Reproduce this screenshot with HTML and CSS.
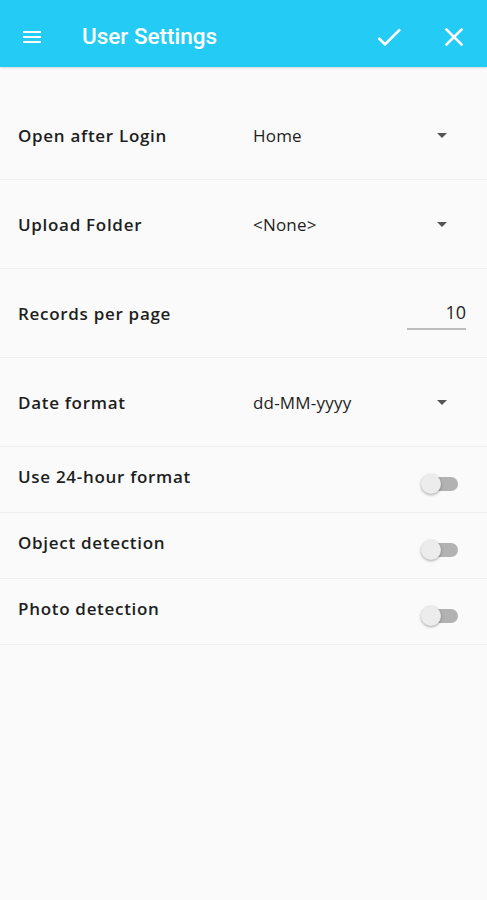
FILE: index.html
```
<!DOCTYPE html>
<html>
    <head>
        <title>User Settings</title>
        <link rel="stylesheet" href="styles.css">
    </head>
    <body>
        <header class="app-bar">
            <svg class="menu-icon" width="24" height="24" viewBox="0 0 24 24">
                <path d="M3 6h18v2H3zM3 11h18v2H3zM3 16h18v2H3z" fill="#fff" />
            </svg>
            <div class="app-title">User Settings</div>
            <svg class="action-icon" width="32" height="32" viewBox="0 0 24 24">
                <path d="M9 16.2L4.8 12l-1.4 1.4L9 19 21 7l-1.4-1.4L9 16.2z" fill="#fff" />
            </svg>
            <svg class="action-icon close-icon" width="32" height="32" viewBox="0 0 24 24">
                <path d="M19 6.4L17.6 5 12 10.6 6.4 5 5 6.4 10.6 12 5 17.6 6.4 19 12 13.4 17.6 19 19 17.6 13.4 12z" fill="#fff" />
            </svg>
        </header>
        <div class="settings">
            <div class="row select-row">
                <div class="label">Open after Login</div>
                <div class="value">Home</div>
                <div class="caret"></div>
            </div>
            <div class="row select-row">
                <div class="label">Upload Folder</div>
                <div class="value">&lt;None&gt;</div>
                <div class="caret"></div>
            </div>
            <div class="row select-row">
                <div class="label">Records per page</div>
                <div class="number-input">10</div>
            </div>
            <div class="row select-row">
                <div class="label">Date format</div>
                <div class="value">dd-MM-yyyy</div>
                <div class="caret"></div>
            </div>
            <div class="row toggle-row">
                <div class="label">Use 24-hour format</div>
                <div class="switch"><div class="switch-thumb"></div></div>
            </div>
            <div class="row toggle-row">
                <div class="label">Object detection</div>
                <div class="switch"><div class="switch-thumb"></div></div>
            </div>
            <div class="row toggle-row">
                <div class="label">Photo detection</div>
                <div class="switch"><div class="switch-thumb"></div></div>
            </div>
        </div>
    </body>
</html>
```

FILE: styles.css
```
body {
    margin: 0;
    background-color: #fafafa;
    font-family: "Open Sans", "DejaVu Sans", sans-serif;
    color: #1e1e1e;
}
.app-bar {
    display: flex;
    align-items: center;
    height: 61px;
    padding: 6px 17px 0 20px;
    background-color: #23cbf5;
    box-shadow: 0 1px 2px rgba(0, 0, 0, 0.15);
}
.menu-icon {
    margin-right: 38px;
}
.app-title {
    flex: 1;
    font-family: Roboto, sans-serif;
    font-weight: 500;
    font-size: 22.5px;
    color: #fff;
    padding-bottom: 2px;
}
.close-icon {
    margin-left: 33px;
}
.settings {
    padding-top: 24px;
}
.row {
    display: flex;
    align-items: center;
    padding: 0 21px 0 18px;
    border-bottom: 1px solid #eeeeee;
}
.select-row {
    height: 88px;
}
.toggle-row {
    height: 65px;
}
.label {
    width: 235px;
    font-size: 17px;
    font-weight: 600;
    letter-spacing: 0.7px;
}
.value {
    flex: 1;
    font-size: 17px;
    font-weight: 500;
    letter-spacing: 0.2px;
}
.caret {
    width: 0;
    height: 0;
    border-left: 5px solid transparent;
    border-right: 5px solid transparent;
    border-top: 5px solid #555;
    margin-right: 19px;
}
.number-input {
    margin-left: auto;
    width: 59px;
    text-align: right;
    font-size: 18px;
    padding: 0 0 4px 0;
    border-bottom: 2px solid #bdbdbd;
    margin-top: 3px;
}
.toggle-row .label {
    margin-top: -6px;
}
.switch {
    position: relative;
    margin-left: auto;
    margin-right: 8px;
    margin-top: 9px;
    width: 34px;
    height: 14px;
    border-radius: 7px;
    background-color: #b2b2b2;
}
.switch-thumb {
    position: absolute;
    left: -3px;
    top: -3px;
    width: 20px;
    height: 20px;
    border-radius: 50%;
    background-color: #ececec;
    box-shadow: 0 1px 3px rgba(0, 0, 0, 0.35);
}
```
